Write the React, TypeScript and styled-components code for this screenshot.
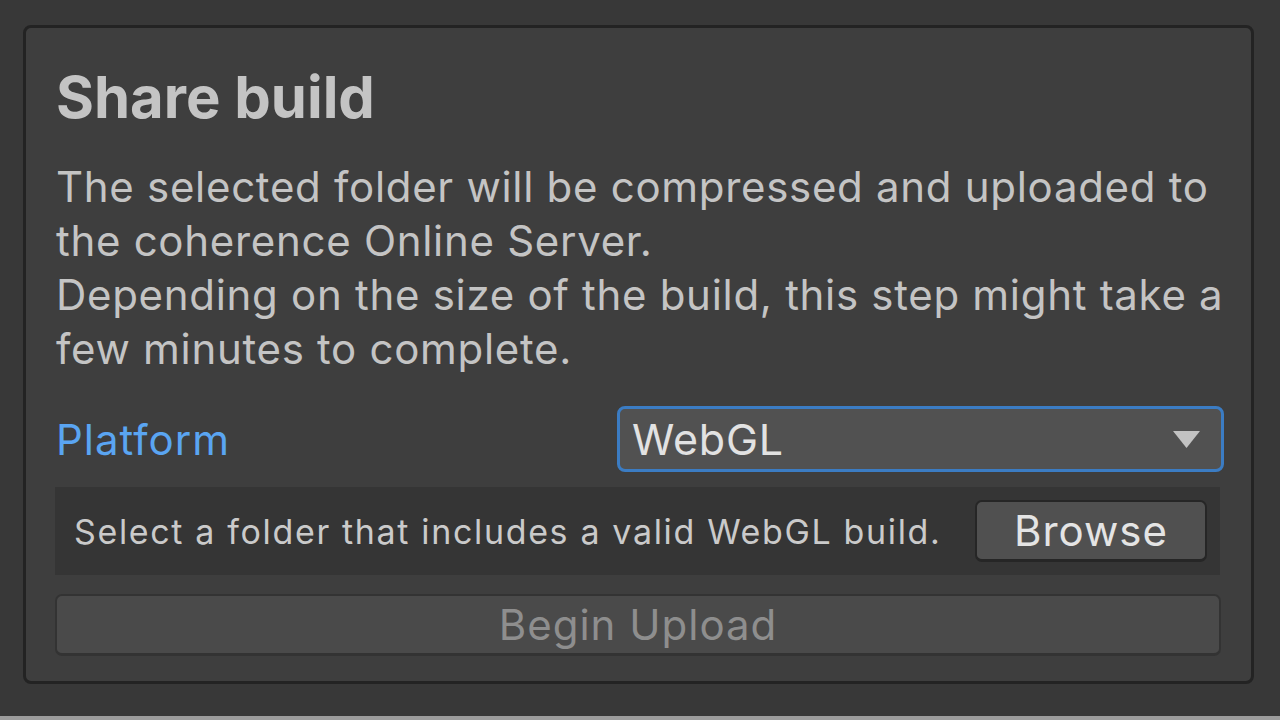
import styled, { createGlobalStyle } from 'styled-components'

const GlobalStyle = createGlobalStyle`
  html, body {
    margin: 0;
    padding: 0;
    background: #383838;
  }
  body {
    font-family: Inter, "Noto Sans", sans-serif;
    width: 1280px;
    height: 720px;
    overflow: hidden;
  }
`

const Page = styled.div`
  height: 716px;
  padding: 25px 0 0 23px;
  box-sizing: border-box;
`

const BottomStrip = styled.div`
  height: 4px;
  background: #9c9c9c;
`

const Panel = styled.div`
  width: 1231px;
  height: 659px;
  box-sizing: border-box;
  border: 3px solid #232323;
  border-radius: 8px;
  background: #3e3e3e;
  padding: 34px 27px 0 29px;
  display: flex;
  flex-direction: column;
`

const Title = styled.h1`
  margin: 0 0 0 1px;
  font-size: 58px;
  line-height: 70px;
  font-weight: 700;
  color: #c4c4c4;
`

const Description = styled.p`
  margin: 28px 0 0 1px;
  font-size: 42px;
  line-height: 54px;
  letter-spacing: 0.7px;
  white-space: nowrap;
  color: #c4c4c4;
`

const FieldRow = styled.div`
  margin-top: 30px;
  display: flex;
  align-items: center;
  justify-content: space-between;
`

const FieldLabel = styled.span<{ $focused?: boolean }>`
  margin-left: 1px;
  font-size: 42px;
  letter-spacing: 1px;
  color: ${p => (p.$focused ? '#5aa5f2' : '#c4c4c4')};
`

const Dropdown = styled.div`
  width: 607px;
  height: 66px;
  box-sizing: border-box;
  border: 3px solid #3b7cc3;
  border-radius: 8px;
  background: #515151;
  display: flex;
  align-items: center;
  justify-content: space-between;
  padding: 0 21px 0 12px;
  font-size: 43px;
  letter-spacing: 0.8px;
  color: #e2e2e2;
`

const HelpBox = styled.div`
  margin-top: 15px;
  width: 1165px;
  height: 88px;
  box-sizing: border-box;
  background: #353535;
  display: flex;
  align-items: center;
  justify-content: space-between;
  padding: 0 13px 0 19px;
`

const HelpText = styled.span`
  font-size: 34px;
  letter-spacing: 1.65px;
  color: #cacaca;
`

const Button = styled.button<{ $disabled?: boolean; $wide?: boolean }>`
  box-sizing: border-box;
  font-family: inherit;
  font-size: 42px;
  letter-spacing: 1px;
  border: 2px solid #262626;
  border-bottom-width: 3px;
  border-radius: 7px;
  background: ${p => (p.$disabled ? '#4a4a4a' : '#505050')};
  color: ${p => (p.$disabled ? '#8e8e8e' : '#e4e4e4')};
  width: ${p => (p.$wide ? '1166px' : '232px')};
  height: 62px;
  padding: 0;
  display: flex;
  align-items: center;
  justify-content: center;
`

const UploadButton = styled(Button)`
  margin-top: 19px;
  border-color: #333333;
`

function Caret() {
  return (
    <svg width="27" height="17" viewBox="0 0 27 17">
      <polygon points="0,0 27,0 13.5,17" fill="#c2c2c2" />
    </svg>
  )
}

export default function App() {
  return (
    <>
      <GlobalStyle />
      <Page>
        <Panel>
          <Title>Share build</Title>
          <Description>
            The selected folder will be compressed and uploaded to
            <br />
            the coherence Online Server.
            <br />
            Depending on the size of the build, this step might take a
            <br />
            few minutes to complete.
          </Description>
          <FieldRow>
            <FieldLabel $focused>Platform</FieldLabel>
            <Dropdown>
              <span>WebGL</span>
              <Caret />
            </Dropdown>
          </FieldRow>
          <HelpBox>
            <HelpText>Select a folder that includes a valid WebGL build.</HelpText>
            <Button>Browse</Button>
          </HelpBox>
          <UploadButton $disabled $wide>
            Begin Upload
          </UploadButton>
        </Panel>
      </Page>
      <BottomStrip />
    </>
  )
}
